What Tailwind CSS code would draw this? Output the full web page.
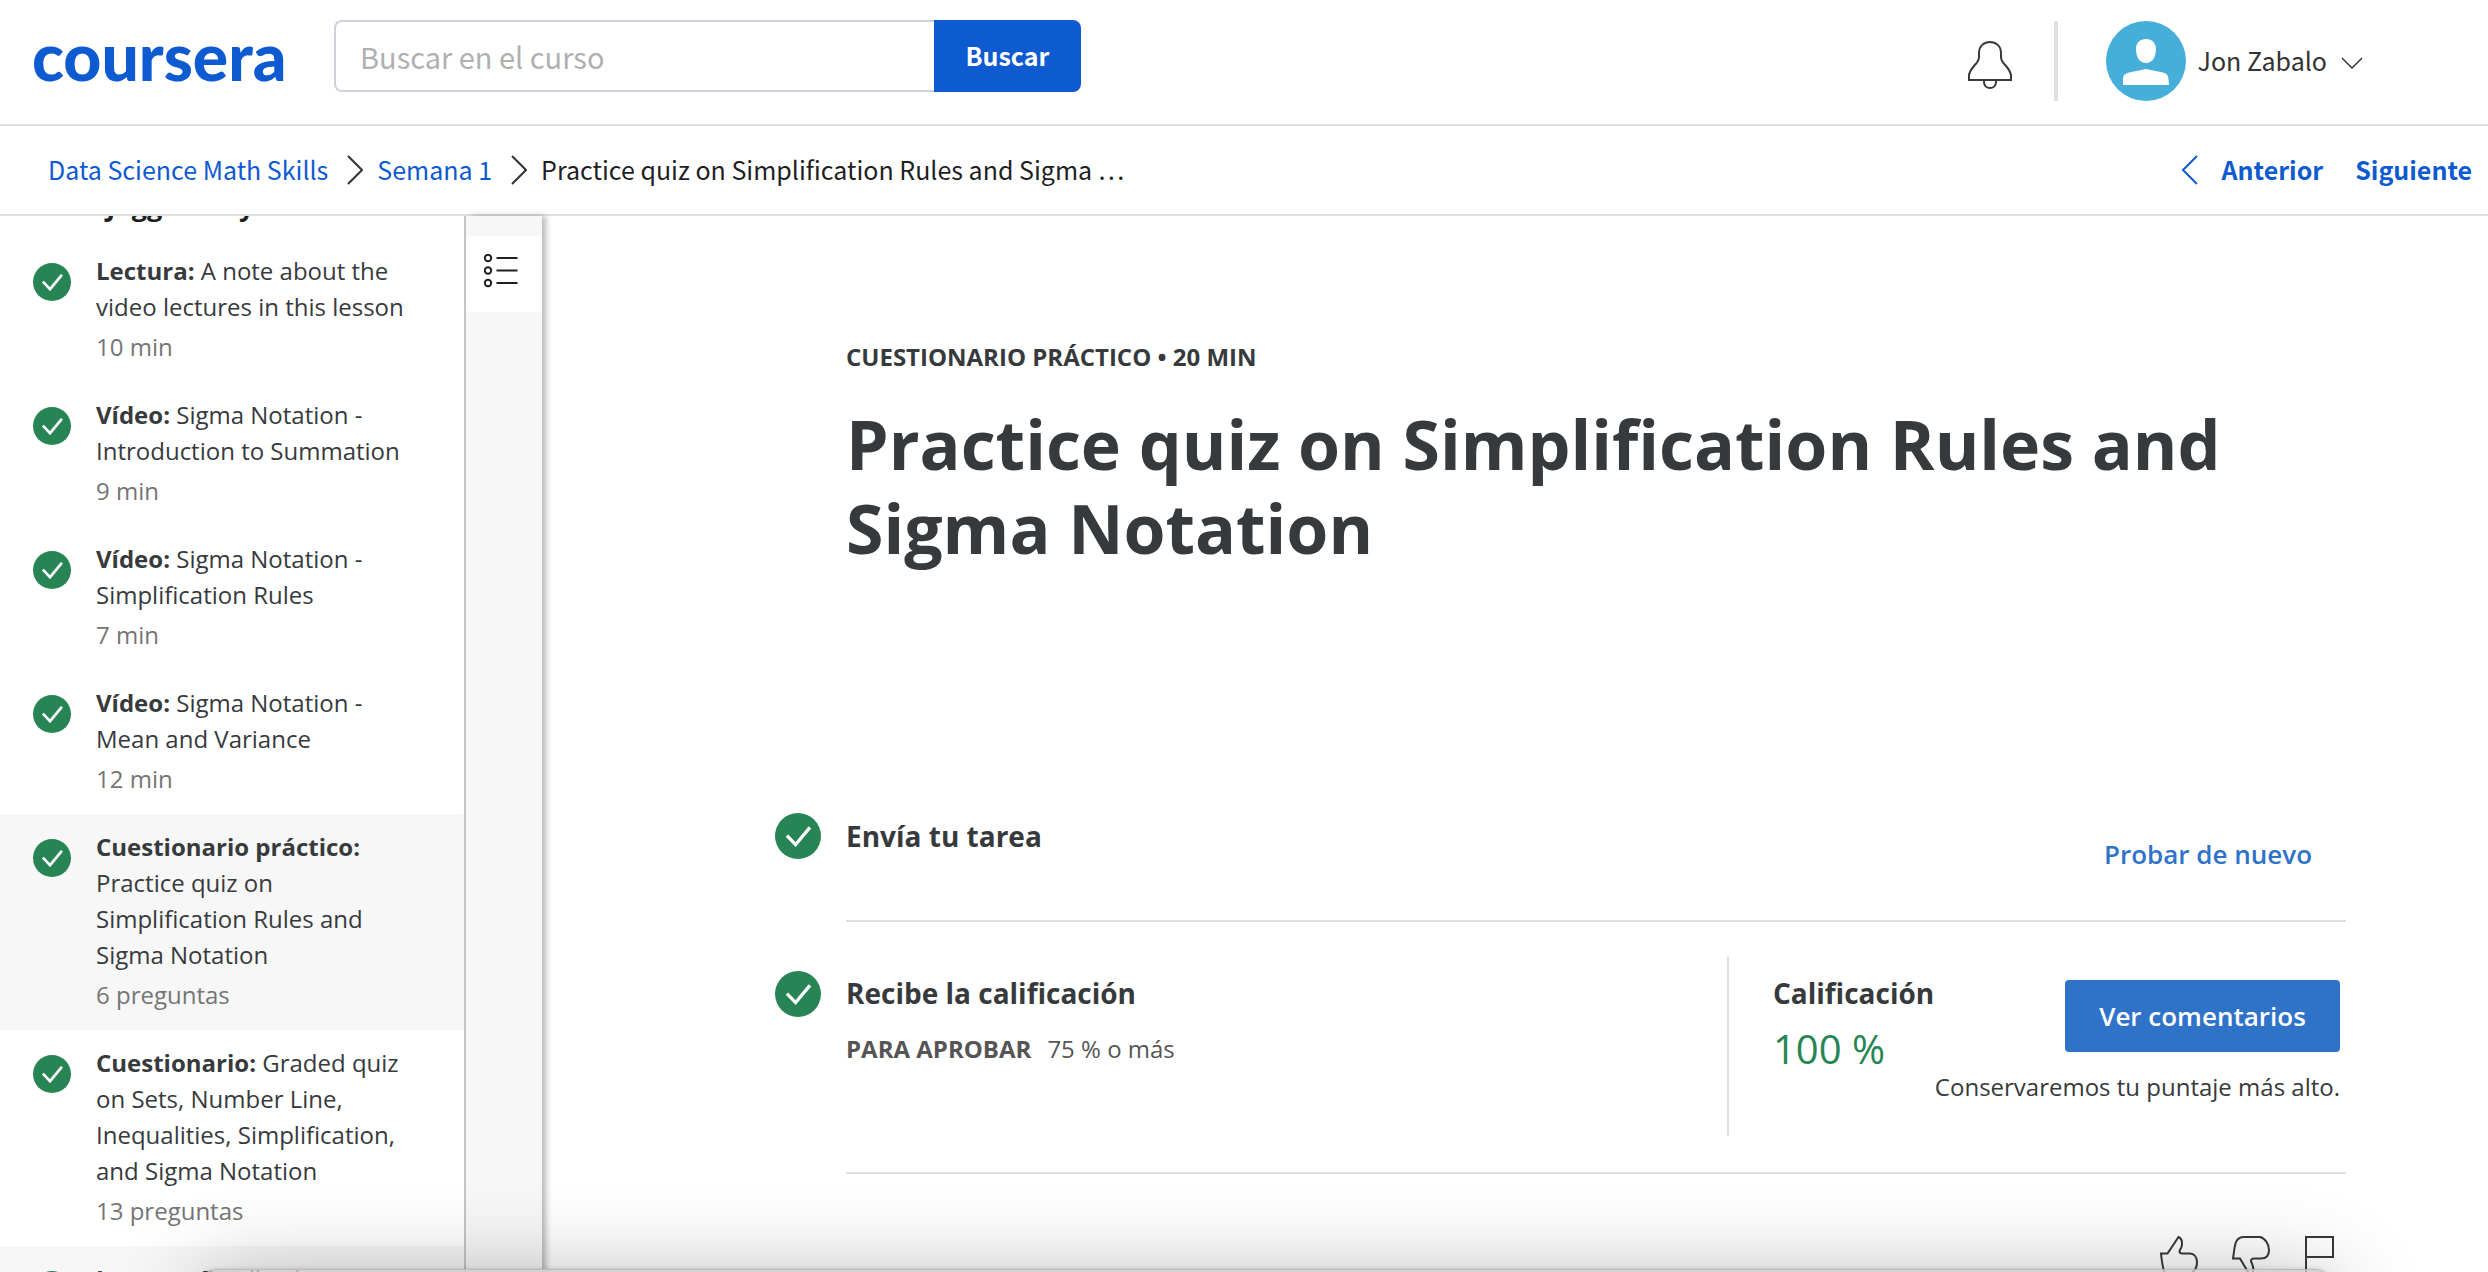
<!DOCTYPE html>
<html lang="es">
<head>
<meta charset="utf-8">
<title>Practice quiz on Simplification Rules and Sigma Notation | Coursera</title>
<script src="https://cdn.jsdelivr.net/npm/@tailwindcss/browser@4"></script>
</head>
<body class="relative flex h-screen flex-col overflow-hidden bg-white font-['Open_Sans',sans-serif] text-2xl text-[#373a3c]">

<svg class="hidden" aria-hidden="true">
  <symbol id="check" viewBox="0 0 48 48">
    <circle cx="24" cy="24" r="24" fill="#278555"/>
    <path d="M12.500 23.500l9 9.500L36.500 15" fill="none" stroke="#fff" stroke-width="3.400"/>
  </symbol>
</svg>

<header class="flex h-[126px] shrink-0 items-center border-b-2 border-[#e0e0e0] pl-8 pr-[125px] font-['Noto_Sans_CJK_SC',sans-serif]">
  <a href="#" class="mr-12 w-[254px] shrink-0 pb-3 font-['Lato',sans-serif] text-[66px] font-black leading-none text-[#0e5ad0]">coursera</a>
  <form class="mt-5 flex h-[72px] self-start">
    <input type="search" aria-label="Buscar en el curso" placeholder="Buscar en el curso" class="w-[600px] rounded-l-lg border-2 border-r-0 border-[#cdd1dc] px-6 text-[29px] outline-none placeholder:text-[#b0b0b0]">
    <button type="button" class="w-[147px] rounded-r-lg bg-[#0e5ad0] text-[25px] font-bold text-white">Buscar</button>
  </form>
  <div class="ml-auto flex items-center pb-0.5">
    <button type="button" aria-label="Notificaciones" class="mt-2">
      <svg class="h-12 w-[44px]" viewBox="0 0 44 48" fill="none" stroke="#373a3c" stroke-width="2"><path d="M1 39v-4c0-4 2-6.500 5-10 3-3.500 5-5 5-9v-4C11 5 16 1 22 1s11 4 11 11v4c0 4 2 5.500 5 9 3 3.500 5 6 5 10v4zM16 39v2c0 4 3 6 6 6s6-2 6-6v-2"/></svg>
    </button>
    <span class="ml-[42px] h-20 w-1 bg-[#e0e0e0]"></span>
    <button type="button" class="ml-12 flex items-center text-[25px] text-[#333]">
      <svg class="size-20" viewBox="0 0 80 80"><circle cx="40" cy="40" r="40" fill="#45afda"/><path d="M40 18c6 0 10 4 10 10 0 7-3 14-10 14s-10-7-10-14c0-6 4-10 10-10zM17 64V58c0-4 2-5.500 6-6.500l17-3.500 17 3.500c4 1 5 2.500 5.500 6.500l.500 6z" fill="#fff"/></svg>
      <span class="ml-3">Jon Zabalo</span>
      <svg class="ml-3.5 mt-1 h-3 w-[22px]" viewBox="0 0 22 12" fill="none" stroke="#373a3c" stroke-width="1.500"><path d="M1 1l10 10L21 1"/></svg>
    </button>
  </div>
</header>

<nav class="flex h-[90px] shrink-0 items-center border-b-2 border-[#e0e0e0] pl-12 pr-4 font-['Noto_Sans_CJK_SC',sans-serif] text-[25px] text-[#1f1f1f]">
  <a href="#" class="text-[#0e5ad0]">Data Science Math Skills</a>
  <svg class="ml-[19px] mr-3.5 h-[30px] w-4" viewBox="0 0 16 30" fill="none" stroke="#333" stroke-width="2"><path d="M1 1l14 14L1 29"/></svg>
  <a href="#" class="text-[#0e5ad0]">Semana 1</a>
  <svg class="ml-[19px] mr-3.5 h-[30px] w-4" viewBox="0 0 16 30" fill="none" stroke="#333" stroke-width="2"><path d="M1 1l14 14L1 29"/></svg>
  <span>Practice quiz on Simplification Rules and Sigma …</span>
  <a href="#" class="ml-auto flex items-center gap-6 font-bold text-[#0e5ad0]">
    <svg class="h-[30px] w-4" viewBox="0 0 16 30" fill="none" stroke="#0e5ad0" stroke-width="2"><path d="M15 1L1 15l14 14"/></svg>Anterior</a>
  <a href="#" class="ml-8 font-bold text-[#0e5ad0]">Siguiente</a>
</nav>

<div class="flex min-h-0 flex-1">
  <aside class="w-[466px] shrink-0 overflow-hidden border-r-2 border-[#c8c8c8] leading-9">
    <h2 class="-mt-7 pb-3.5 pl-[38px] text-[27px] font-bold leading-9 text-[#1f1f1f]">That Jagged S Symbol</h2>
    <ul>
      <li><a href="#" class="flex pb-[17px] pl-[33px] pr-9 pt-[15px]">
        <svg class="mr-[25px] mt-[10px] size-[38px] shrink-0"><use href="#check"/></svg>
        <div><p><b>Lectura:</b> A note about the video lectures in this lesson</p><p class="mt-1 text-[#757575]">10 min</p></div></a></li>
      <li><a href="#" class="flex pb-[17px] pl-[33px] pr-9 pt-[15px]">
        <svg class="mr-[25px] mt-[10px] size-[38px] shrink-0"><use href="#check"/></svg>
        <div><p><b>Vídeo:</b> Sigma Notation - Introduction to Summation</p><p class="mt-1 text-[#757575]">9 min</p></div></a></li>
      <li><a href="#" class="flex pb-[17px] pl-[33px] pr-9 pt-[15px]">
        <svg class="mr-[25px] mt-[10px] size-[38px] shrink-0"><use href="#check"/></svg>
        <div><p><b>Vídeo:</b> Sigma Notation - Simplification Rules</p><p class="mt-1 text-[#757575]">7 min</p></div></a></li>
      <li><a href="#" class="flex pb-[17px] pl-[33px] pr-9 pt-[15px]">
        <svg class="mr-[25px] mt-[10px] size-[38px] shrink-0"><use href="#check"/></svg>
        <div><p><b>Vídeo:</b> Sigma Notation - Mean and Variance</p><p class="mt-1 text-[#757575]">12 min</p></div></a></li>
      <li><a href="#" aria-current="page" class="flex bg-[#f7f7f7] pb-[17px] pl-[33px] pr-9 pt-[15px]">
        <svg class="mr-[25px] mt-[10px] size-[38px] shrink-0"><use href="#check"/></svg>
        <div><p><b>Cuestionario práctico:</b> Practice quiz on Simplification Rules and Sigma Notation</p><p class="mt-1 text-[#757575]">6 preguntas</p></div></a></li>
      <li><a href="#" class="flex pb-[17px] pl-[33px] pr-9 pt-[15px]">
        <svg class="mr-[25px] mt-[10px] size-[38px] shrink-0"><use href="#check"/></svg>
        <div><p><b>Cuestionario:</b> Graded quiz on Sets, Number Line, Inequalities, Simplification, and Sigma Notation</p><p class="mt-1 text-[#757575]">13 preguntas</p></div></a></li>
      <li><a href="#" class="flex bg-[#f7f7f7] pb-[17px] pl-[33px] pr-9 pt-[15px]">
        <svg class="mr-[25px] mt-[10px] size-[38px] shrink-0"><use href="#check"/></svg>
        <div><p><b>Lectura:</b> Feedback</p></div></a></li>
    </ul>
  </aside>

  <div class="w-[76px] shrink-0 bg-[#f7f7f7] pt-5 shadow-[4px_0_6px_rgba(0,0,0,0.28)]">
    <button type="button" aria-label="Contenido" class="flex h-[76px] w-full items-center rounded bg-white pb-1.5 pl-[18px]">
      <svg class="h-[34px] w-[34px]" viewBox="0 0 34 34" fill="none" stroke="#1f1f1f" stroke-width="2"><circle cx="4" cy="4" r="3.200"/><circle cx="4" cy="16.500" r="3.200"/><circle cx="4" cy="29" r="3.200"/><path d="M12.500 4h21M12.500 16.500h21M12.500 29h21"/></svg>
    </button>
  </div>

  <main class="min-w-0 flex-1 pl-[232px] pr-[142px] pt-[123px]">
    <div class="pl-[72px]">
      <p class="font-bold leading-9">CUESTIONARIO PRÁCTICO • 20 MIN</p>
      <h1 class="mt-[27px] text-[68px] font-bold leading-[84px]">Practice quiz on Simplification Rules and Sigma Notation</h1>
    </div>

    <section class="mt-[248px] flex">
      <div class="flex h-9 w-[72px] shrink-0 items-center pl-px"><svg class="size-[46px] shrink-0"><use href="#check"/></svg></div>
      <div class="flex flex-1 justify-between border-b-2 border-[#e0e0e0] pb-[30px] pr-1.5">
        <h2 class="text-[28px] font-bold leading-9">Envía tu tarea</h2>
        <button type="button" class="h-[72px] px-7 text-[26px] font-semibold text-[#2f73c9]">Probar de nuevo</button>
      </div>
    </section>

    <section class="flex">
      <div class="mt-[54px] flex h-9 w-[72px] shrink-0 items-center pl-px"><svg class="size-[46px] shrink-0"><use href="#check"/></svg></div>
      <div class="flex flex-1 justify-between border-b-2 border-[#e0e0e0] pb-9 pr-1.5 pt-[34px]">
        <div class="pt-[19px] leading-9">
          <h2 class="text-[28px] font-bold leading-9">Recibe la calificación</h2>
          <p class="mt-5 flex gap-4 text-[#555]"><b>PARA APROBAR</b><span>75 % o más</span></p>
        </div>
        <div class="h-[180px] w-[613px] border-l-2 border-[#e0e0e0] pl-11 pt-[19px] leading-9">
          <div class="flex justify-between">
            <div>
              <h2 class="text-[28px] font-bold leading-9">Calificación</h2>
              <p class="mt-5 text-[40px] leading-9 text-[#278555]">100 %</p>
            </div>
            <button type="button" class="mt-[5px] h-[72px] w-[275px] rounded bg-[#2f73c9] text-[26px] font-semibold text-white">Ver comentarios</button>
          </div>
          <p class="mt-0.5 text-right">Conservaremos tu puntaje más alto.</p>
        </div>
      </div>
    </section>

    <div class="mt-[61px] flex justify-end gap-[34px] pr-3">
      <button type="button" aria-label="Me gusta"><svg class="h-10 w-[38px]" viewBox="0 0 38 40" fill="none" stroke="#373a3c" stroke-width="2"><path d="M1 18.500h6.500L18.500 2c4 2 4 6 3 10-1 2.500-2 3-2 4.500 0 1.500 1 2 3 2h7c5 0 7.500 4 7.500 9 0 5-3 9-6 11H5c-2-4-3-10-4-20z"/></svg></button>
      <button type="button" aria-label="No me gusta"><svg class="h-10 w-[38px]" viewBox="0 0 38 40" fill="none" stroke="#373a3c" stroke-width="2"><path d="M1 23.500C3 12 2 2 12 2h16c5 1 9 7 9 13 0 5-2 8.500-8 8.500h-7c-3 0-3.500 2-2.500 4 2 4 3 8 0 12h-2L8 23.500z"/></svg></button>
      <button type="button" aria-label="Marcar"><svg class="h-10 w-[30px]" viewBox="0 0 30 40" fill="none" stroke="#373a3c" stroke-width="2"><path d="M2 40V2h27v20H2"/></svg></button>
    </div>
  </main>
</div>

<div class="absolute -bottom-[397px] left-[200px] right-[156px] h-[400px] rounded-2xl border-t border-[#b9b2b4]/80 bg-[#cdc7c8]/80 shadow-[0_10px_90px_rgba(0,0,0,0.3),0_0_4px_rgba(0,0,0,0.15)]"></div>
</body>
</html>
